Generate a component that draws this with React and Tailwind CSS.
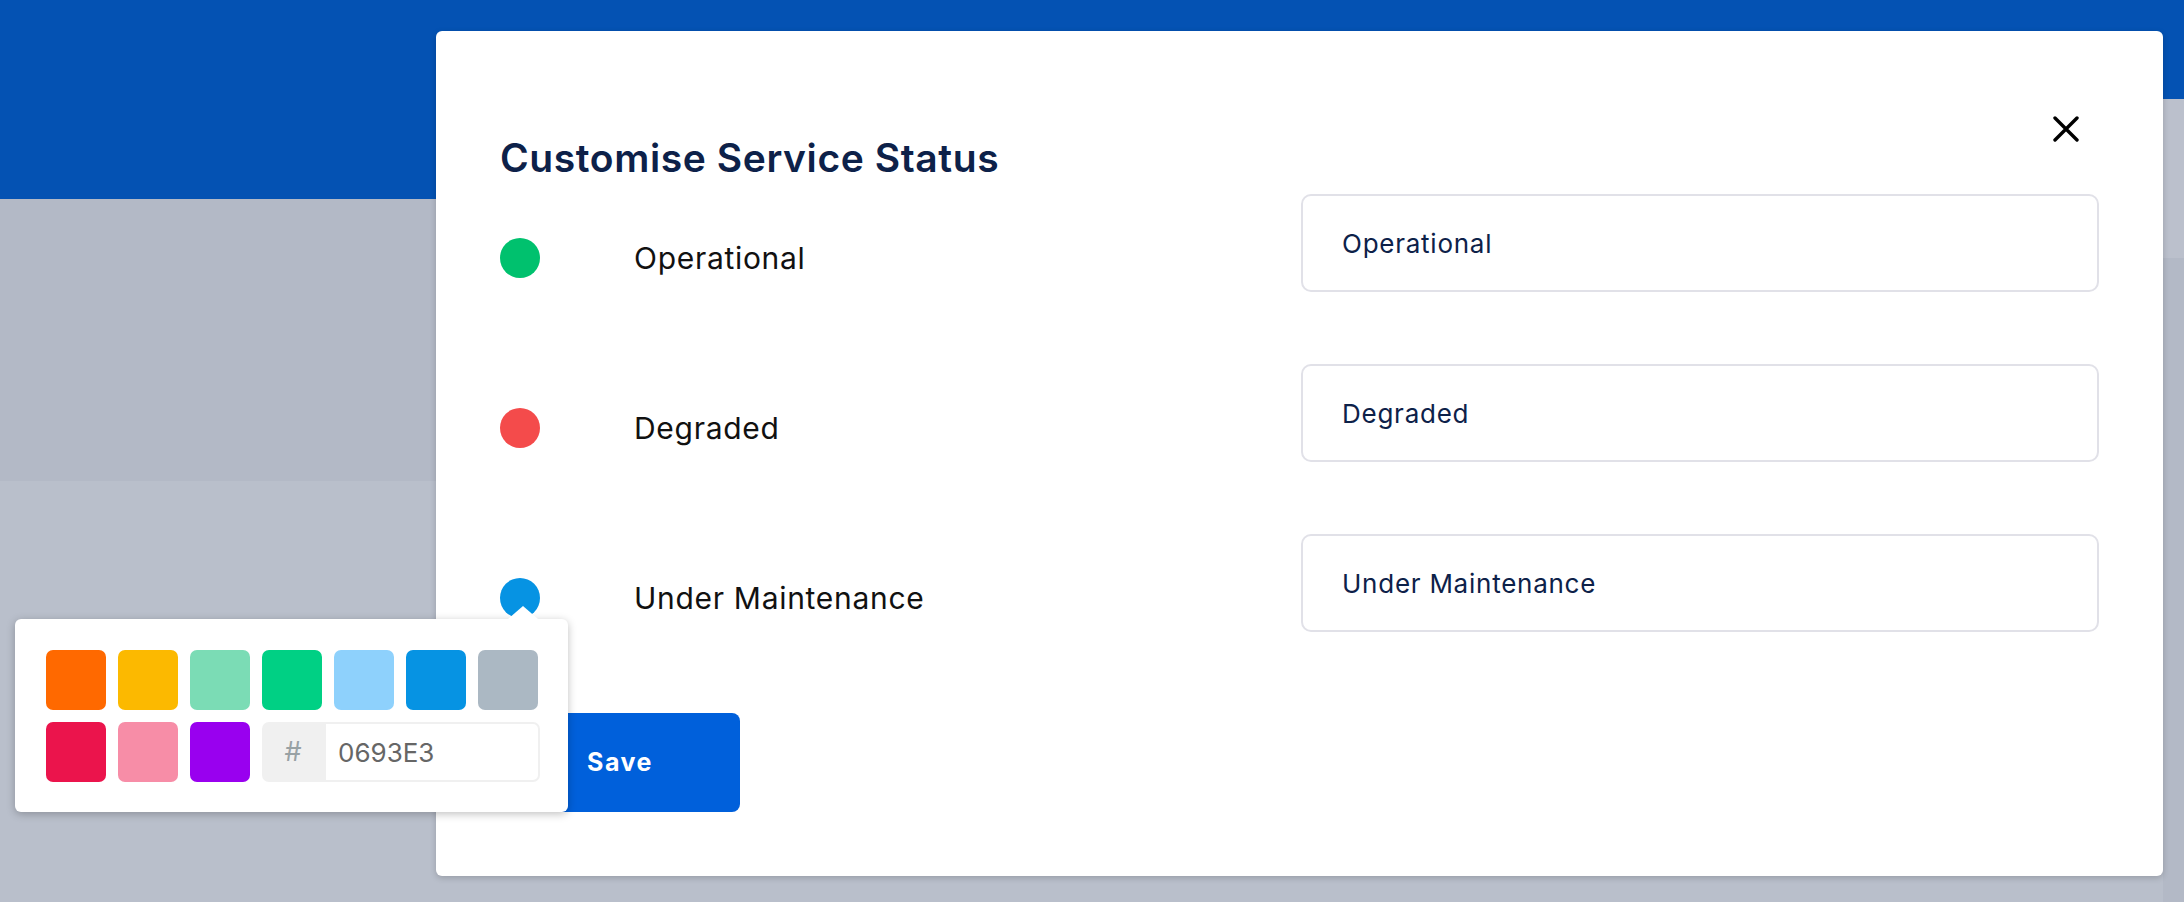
import { useState } from 'react';

const SWATCHES = ['#ff6900', '#fcb900', '#7bdcb5', '#00d084', '#8ed1fc', '#0693e3', '#abb8c3', '#eb144c', '#f78da7', '#9900ef'];

const STATUSES = [
    { key: 'operational', label: 'Operational', color: '#00c16e' },
    { key: 'degraded', label: 'Degraded', color: '#f44b4b' },
    { key: 'maintenance', label: 'Under Maintenance', color: '#0693e3' },
];

function ColorPopover({ hex, onPick }) {
    return (
        <div className="absolute left-[15px] top-[619px] w-[553px] rounded-[6px] bg-white shadow-[0_2px_8px_rgba(0,0,0,0.25)]">
            {/* pointer */}
            <div className="absolute -top-[13px] left-[493px] w-0 h-0 border-l-[15px] border-r-[15px] border-b-[13px] border-l-transparent border-r-transparent border-b-white"></div>
            <div className="flex flex-wrap pt-[31px] pl-[31px] pr-[18px] pb-[18px]">
                {SWATCHES.map((c) => (
                    <button
                        key={c}
                        type="button"
                        onClick={() => onPick(c.slice(1).toUpperCase())}
                        className="w-[60px] h-[60px] rounded-[7px] mr-[12px] mb-[12px]"
                        style={{ backgroundColor: c }}
                    ></button>
                ))}
                <div className="flex h-[60px] mb-[12px]">
                    <div className="w-[62px] h-[60px] rounded-l-[7px] bg-[#f0f0f0] text-[#98a1a4] text-[27px] flex items-center justify-center">#</div>
                    <input
                        value={hex}
                        onChange={(e) => onPick(e.target.value)}
                        className="w-[216px] h-[60px] rounded-r-[7px] pl-[14px] text-[26px] text-[#666] shadow-[inset_0_0_0_2px_#f0f0f0] outline-none"
                    />
                </div>
            </div>
        </div>
    );
}

export default function App() {
    const [names, setNames] = useState({ operational: 'Operational', degraded: 'Degraded', maintenance: 'Under Maintenance' });
    const [hex, setHex] = useState('0693E3');

    return (
        <div className="relative w-full h-[902px] overflow-hidden" style={{ fontFamily: 'Inter, "Noto Sans", sans-serif' }}>
            {/* Page underneath the overlay */}
            <div className="flex h-full">
                <div className="flex-1 flex flex-col">
                    <div className="h-[199px] bg-[#0452b3]"></div>
                    <div className="h-[282px] bg-[#b3b9c6]"></div>
                    <div className="flex-1 bg-[#b9bfcb]"></div>
                </div>
                <div className="w-[21px] flex flex-col">
                    <div className="h-[99px] bg-[#0452b3]"></div>
                    <div className="h-[159px] bg-[#bbc0cc]"></div>
                    <div className="flex-1 bg-[#b3b9c6]"></div>
                </div>
            </div>

            {/* Modal */}
            <div className="absolute left-[436px] top-[31px] w-[1727px] h-[845px] bg-white rounded-[6px] px-16 shadow-[0_2px_6px_rgba(0,0,0,0.18)]">
                <div className="flex justify-between items-start h-[163px]">
                    <h1 className="mt-[104px] text-[39px] leading-[46px] font-semibold text-[#0d2149] tracking-[0.6px]">Customise Service Status</h1>
                    <button type="button" className="mt-[85px] mr-[20px] w-[26px] h-[26px]">
                        <svg viewBox="0 0 26 26" className="w-[26px] h-[26px]" fill="none" stroke="#000" strokeWidth="3.4" strokeLinecap="round">
                            <path d="M2 2L24 24M24 2L2 24" />
                        </svg>
                    </button>
                </div>

                <div className="flex flex-col gap-[72px]">
                    {STATUSES.map((s) => (
                        <div key={s.key} className="grid grid-cols-[801px_798px]">
                            <div className="flex items-center gap-[94px] pt-[44px] self-start">
                                <span className="w-10 h-10 rounded-full" style={{ backgroundColor: s.key === 'maintenance' ? '#' + hex : s.color }}></span>
                                <span className="text-[30px] leading-10 tracking-[0.7px] text-[#111]">{s.label}</span>
                            </div>
                            <input
                                value={names[s.key]}
                                onChange={(e) => setNames({ ...names, [s.key]: e.target.value })}
                                className="h-[98px] border-2 border-[#e1e1e8] rounded-[10px] pl-[39px] text-[26px] tracking-[0.75px] text-[#0d2149] outline-none"
                            />
                        </div>
                    ))}
                </div>

                <button type="button" className="mt-[81px] w-[240px] h-[99px] rounded-[8px] bg-[#0060db] text-white text-[25px] tracking-[1.5px] font-bold">
                    Save
                </button>
            </div>

            <ColorPopover hex={hex} onPick={setHex} />
        </div>
    );
}
